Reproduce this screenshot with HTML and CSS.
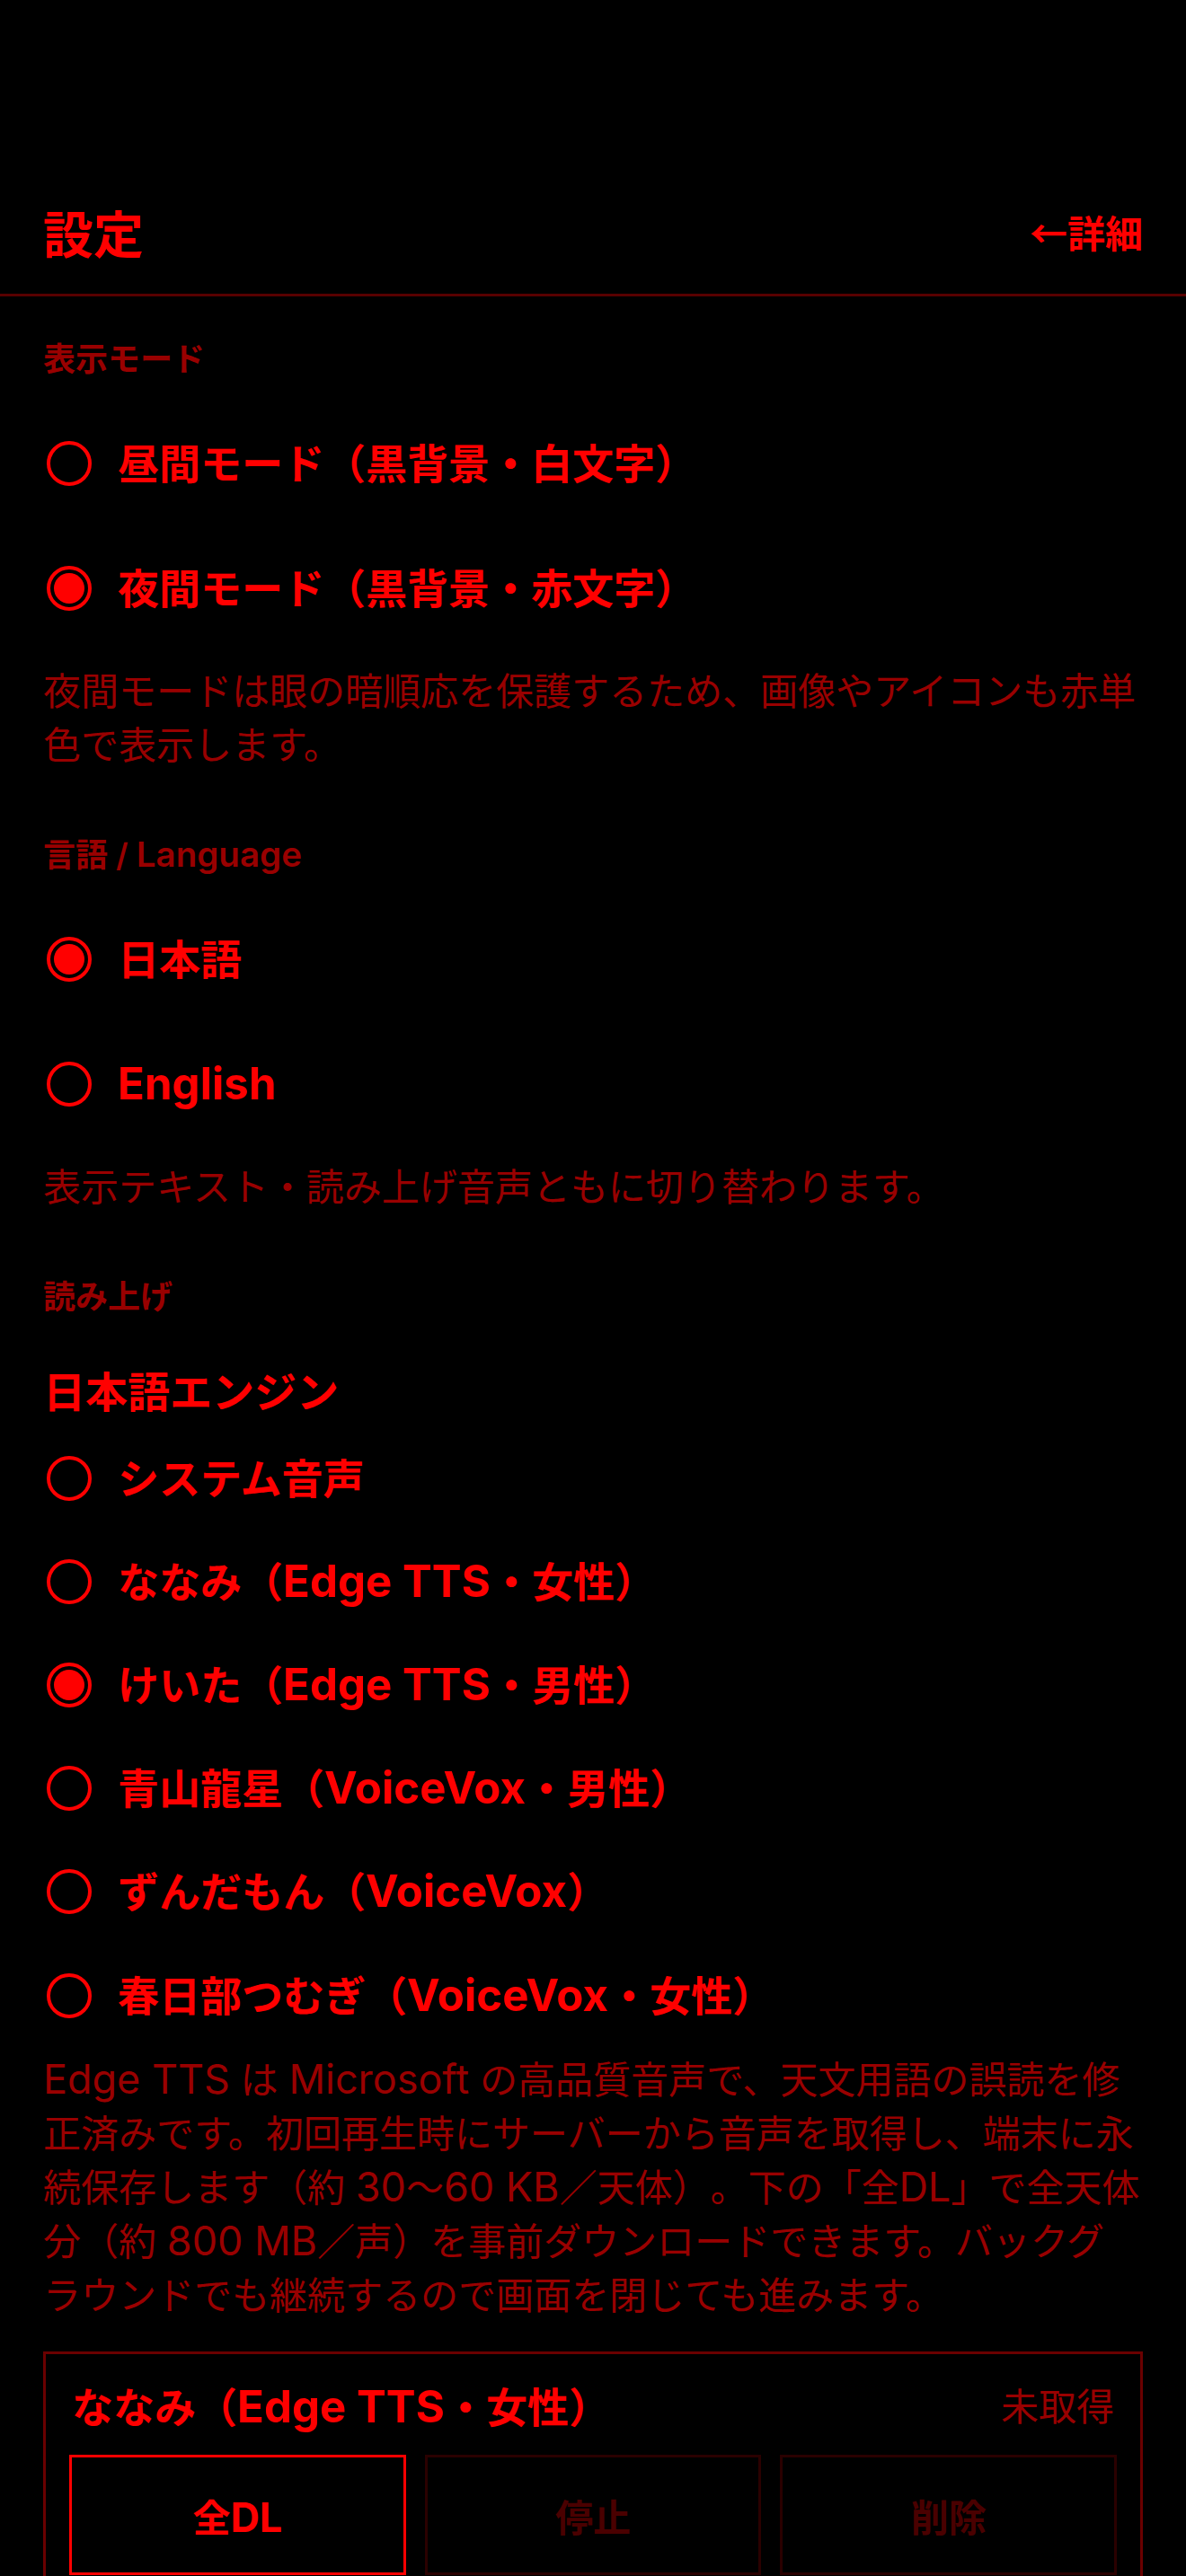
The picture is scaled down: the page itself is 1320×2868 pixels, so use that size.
FILE: index.html
```html
<!DOCTYPE html>
<html lang="ja">
<head>
<meta charset="utf-8">
<title>設定</title>
<link rel="stylesheet" href="styles.css">
</head>
<body>
<div class="screen">
  <header class="topbar">
    <h1 class="title">設定</h1>
    <a class="detail-link">←詳細</a>
  </header>

  <main class="content">
    <section class="section">
      <h2 class="section-label">表示モード</h2>
      <div class="options options-lg">
        <div class="option">
          <svg class="radio" viewBox="0 0 50 50"><circle cx="25" cy="25" r="23" fill="none" stroke="currentColor" stroke-width="4"/></svg>
          <span class="option-text">昼間モード（黒背景・白文字）</span>
        </div>
        <div class="option">
          <svg class="radio" viewBox="0 0 50 50"><circle cx="25" cy="25" r="23" fill="none" stroke="currentColor" stroke-width="4"/><circle cx="25" cy="25" r="17" fill="currentColor"/></svg>
          <span class="option-text">夜間モード（黒背景・赤文字）</span>
        </div>
      </div>
      <p class="note">夜間モードは眼の暗順応を保護するため、画像やアイコンも赤単色で表示します。</p>
    </section>

    <section class="section">
      <h2 class="section-label">言語 / <span class="en">Language</span></h2>
      <div class="options options-lg">
        <div class="option">
          <svg class="radio" viewBox="0 0 50 50"><circle cx="25" cy="25" r="23" fill="none" stroke="currentColor" stroke-width="4"/><circle cx="25" cy="25" r="17" fill="currentColor"/></svg>
          <span class="option-text">日本語</span>
        </div>
        <div class="option">
          <svg class="radio" viewBox="0 0 50 50"><circle cx="25" cy="25" r="23" fill="none" stroke="currentColor" stroke-width="4"/></svg>
          <span class="option-text"><span class="en">English</span></span>
        </div>
      </div>
      <p class="note">表示テキスト・読み上げ音声ともに切り替わります。</p>
    </section>

    <section class="section">
      <h2 class="section-label">読み上げ</h2>
      <h3 class="sub-heading">日本語エンジン</h3>
      <div class="options options-sm">
        <div class="option">
          <svg class="radio" viewBox="0 0 50 50"><circle cx="25" cy="25" r="23" fill="none" stroke="currentColor" stroke-width="4"/></svg>
          <span class="option-text">システム音声</span>
        </div>
        <div class="option">
          <svg class="radio" viewBox="0 0 50 50"><circle cx="25" cy="25" r="23" fill="none" stroke="currentColor" stroke-width="4"/></svg>
          <span class="option-text">ななみ（<span class="en">Edge TTS</span>・女性）</span>
        </div>
        <div class="option">
          <svg class="radio" viewBox="0 0 50 50"><circle cx="25" cy="25" r="23" fill="none" stroke="currentColor" stroke-width="4"/><circle cx="25" cy="25" r="17" fill="currentColor"/></svg>
          <span class="option-text">けいた（<span class="en">Edge TTS</span>・男性）</span>
        </div>
        <div class="option">
          <svg class="radio" viewBox="0 0 50 50"><circle cx="25" cy="25" r="23" fill="none" stroke="currentColor" stroke-width="4"/></svg>
          <span class="option-text">青山龍星（<span class="en">VoiceVox</span>・男性）</span>
        </div>
        <div class="option">
          <svg class="radio" viewBox="0 0 50 50"><circle cx="25" cy="25" r="23" fill="none" stroke="currentColor" stroke-width="4"/></svg>
          <span class="option-text">ずんだもん（<span class="en">VoiceVox</span>）</span>
        </div>
        <div class="option">
          <svg class="radio" viewBox="0 0 50 50"><circle cx="25" cy="25" r="23" fill="none" stroke="currentColor" stroke-width="4"/></svg>
          <span class="option-text">春日部つむぎ（<span class="en">VoiceVox</span>・女性）</span>
        </div>
      </div>
      <p class="note note-tight"><span class="en">Edge TTS</span> は <span class="en">Microsoft</span> の高品質音声で、天文用語の誤読を修<br>正済みです。初回再生時にサーバーから音声を取得し、端末に永<br>続保存します（約 <span class="en">30</span>〜<span class="en">60 KB</span>／天体）。下の「全<span class="en">DL</span>」で全天体<br>分（約 <span class="en">800 MB</span>／声）を事前ダウンロードできます。バックグ<br>ラウンドでも継続するので画面を閉じても進みます。</p>

      <div class="voice-card">
        <div class="voice-card-head">
          <span class="voice-name">ななみ（<span class="en">Edge TTS</span>・女性）</span>
          <span class="voice-status">未取得</span>
        </div>
        <div class="voice-actions">
          <button class="action action-primary">全<span class="en">DL</span></button>
          <button class="action action-disabled">停止</button>
          <button class="action action-disabled">削除</button>
        </div>
      </div>
    </section>
  </main>
</div>
</body>
</html>
```

FILE: styles.css
```css
html, body {
  margin: 0;
  padding: 0;
  background: #000;
}

body {
  font-family: "Inter", "Noto Sans CJK JP", sans-serif;
  color: #ff0000;
  text-spacing-trim: space-all;
}

.en {
  font-size: 1.07em;
  line-height: 1;
}

.screen {
  width: 1320px;
}

.topbar {
  margin-top: 188px;
  height: 139px;
  padding: 0 48px;
  display: flex;
  align-items: center;
  justify-content: space-between;
  border-bottom: 3px solid #580000;
}

.title {
  margin: 0;
  font-family: "Noto Sans CJK JP", sans-serif;
  font-size: 56px;
  font-weight: 700;
  line-height: 1;
}

.detail-link {
  font-family: "Noto Sans CJK JP", sans-serif;
  font-size: 42px;
  font-weight: 700;
  line-height: 1;
  color: #ff0000;
}

.content {
  padding: 47px 48px 0;
}

.section + .section {
  margin-top: 69px;
}

.section-label {
  margin: 0;
  font-size: 36px;
  font-weight: 600;
  line-height: 47px;
  color: #990000;
}

.sub-heading {
  margin: 55px 0 0;
  font-size: 47px;
  font-weight: 700;
  line-height: 54px;
  color: #ff0000;
}

.options {
  display: flex;
  flex-direction: column;
}

.options-lg {
  margin-top: 22px;
}

.options-lg .option {
  height: 139px;
}

.options-sm {
  margin-top: 11px;
}

.options-sm .option {
  height: 115.2px;
}

.option {
  display: flex;
  align-items: center;
}

.radio {
  width: 50px;
  height: 50px;
  margin-left: 4px;
  flex: none;
  color: #ff0000;
}

.option-text {
  margin-left: 29px;
  font-size: 46px;
  font-weight: 700;
  line-height: 54px;
}

.note {
  margin: 16px 0 0;
  font-size: 42px;
  font-weight: 400;
  line-height: 60px;
  color: #990000;
}

.note-tight {
  margin-top: 7px;
}

.voice-card {
  margin-top: 32px;
  border: 3px solid #6a0000;
  padding: 32px 26px 26px;
}

.voice-card-head {
  display: flex;
  align-items: center;
  justify-content: space-between;
  height: 54px;
}

.voice-name {
  font-size: 46px;
  font-weight: 700;
  line-height: 54px;
  padding-left: 3px;
}

.voice-status {
  font-size: 42px;
  font-weight: 400;
  line-height: 54px;
  color: #990000;
  padding-right: 3px;
}

.voice-actions {
  margin-top: 26px;
  display: grid;
  grid-template-columns: repeat(3, 1fr);
  gap: 21px;
}

.action {
  height: 134px;
  background: #000;
  font-family: "Inter", "Noto Sans CJK JP", sans-serif;
  font-size: 42px;
  font-weight: 700;
  border: 3px solid;
  border-radius: 0;
  padding: 0;
}

.action-primary {
  color: #ff0000;
  border-color: #ff0000;
}

.action-disabled {
  color: #4a0000;
  border-color: #2a0000;
}
```
